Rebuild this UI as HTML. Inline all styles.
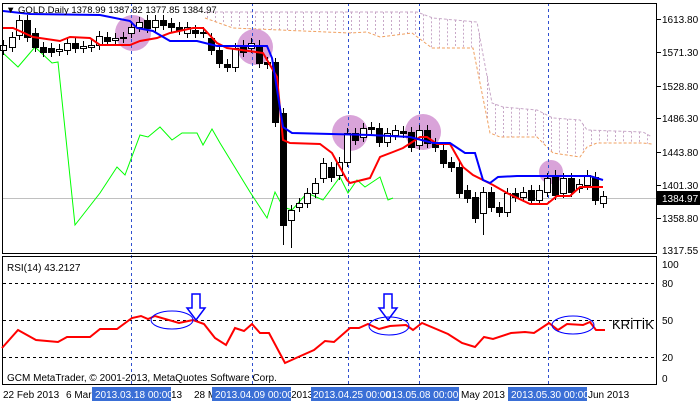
<!DOCTYPE html>
<html><head><meta charset="utf-8"><style>
html,body{margin:0;padding:0;background:#fff;width:700px;height:402px;overflow:hidden}
svg{display:block;font-family:"Liberation Sans",sans-serif}
</style></head><body>
<svg id="s" width="700" height="402" xmlns="http://www.w3.org/2000/svg">
<rect width="700" height="402" fill="#fff"/>
<g id="cloud"></g>
<g fill="#d9a3d9">
<circle cx="133" cy="33" r="18"/><circle cx="255" cy="47" r="18"/><circle cx="350" cy="133" r="18"/><circle cx="423" cy="132" r="18"/><circle cx="551" cy="172" r="12"/>
</g>
<g stroke="#3050d0" stroke-dasharray="3,3" stroke-width="1">
<line x1="131.5" y1="3" x2="131.5" y2="385"/><line x1="252.5" y1="3" x2="252.5" y2="385"/><line x1="348.5" y1="3" x2="348.5" y2="385"/><line x1="419.5" y1="3" x2="419.5" y2="385"/><line x1="548.5" y1="3" x2="548.5" y2="385"/>
</g>
<line x1="2" y1="198.5" x2="657" y2="198.5" stroke="#c0c0c0"/>
<polyline fill="none" stroke="#00ff00" stroke-width="1" points="3,53 18,67 35,47 52,63 58,62 75,225 100,193 117,167 125,175 140,135 148,137 160,127 172,140 182,133 197,133 203,145 212,129 220,143 250,192 267,218 275,192 283,207 292,210 307,193 323,200 340,177 348,193 357,180 365,187 380,177 388,200 393,198"/>
<g id="candles"></g>
<polyline fill="none" stroke="#ff0000" stroke-width="2" points="3,28 13,28 33,37 60,41 70,37 90,38 100,45 130,45 140,41 157,38 170,33 193,28 203,28 217,43 227,48 263,53 277,77 283,140 290,143 320,144 332,153 347,180 350,183 370,178 380,157 393,152 403,148 420,137 427,137 437,144 450,144 463,167 473,175 493,185 507,193 530,204 547,204 557,196 570,196 580,187 603,187"/>
<polyline fill="none" stroke="#0000ff" stroke-width="2" points="3,11 30,14 100,15 130,21 137,28 153,31 170,41 197,41 217,46 267,46 272,58 283,127 292,133 370,135 410,137 433,143 450,143 465,153 475,153 483,180 490,183 498,177 517,176 590,176 603,180"/>
<rect x="2.5" y="3.5" width="654" height="250" fill="none" stroke="#000"/>
<rect x="2.5" y="256.5" width="654" height="128" fill="none" stroke="#000"/>
<g font-size="10" fill="#000">
<text x="6" y="13" font-size="9.5">▼ GOLD.Daily  1378.99 1387.82 1377.85 1384.97</text>
<text x="662" y="23">1613.80</text><text x="662" y="56">1571.30</text><text x="662" y="90">1528.80</text><text x="662" y="122">1486.30</text><text x="662" y="156">1443.80</text><text x="662" y="189">1401.30</text><text x="662" y="222">1358.80</text><text x="662" y="254">1317.55</text>
<rect x="657" y="191" width="43" height="14" fill="#000"/>
<text x="662" y="202" fill="#fff">1384.97</text>
<text x="662" y="268">100</text><text x="662" y="287">80</text><text x="662" y="324">50</text><text x="662" y="361">20</text><text x="662" y="382">0</text>
<text x="7" y="271">RSI(14) 43.2127</text>
<text x="7" y="381">GCM MetaTrader, © 2001-2013, MetaQuotes Software Corp.</text>
</g>
<g stroke="#000" stroke-width="1">
<line x1="657" y1="19.5" x2="661" y2="19.5"/><line x1="657" y1="52.5" x2="661" y2="52.5"/><line x1="657" y1="86.5" x2="661" y2="86.5"/><line x1="657" y1="118.5" x2="661" y2="118.5"/><line x1="657" y1="152.5" x2="661" y2="152.5"/><line x1="657" y1="185.5" x2="661" y2="185.5"/><line x1="657" y1="218.5" x2="661" y2="218.5"/>
</g>
<g stroke="#000" stroke-dasharray="3,3"><line x1="3" y1="283.5" x2="656" y2="283.5"/><line x1="3" y1="320.5" x2="656" y2="320.5"/><line x1="3" y1="357.5" x2="656" y2="357.5"/></g>
<polyline fill="none" stroke="#ff0000" stroke-width="2" points="2,348 18,330 36,340 58,342 67,337 90,337 100,329 117,329 132,318 141,316 148,319 155,316 179,323 193,320 204,324 215,338 226,345 235,328 244,331 252,324 260,333 269,333 285,363 296,358 314,350 325,341 334,342 350,328 359,328 368,324 379,329 390,326 406,325 413,330 422,323 448,334 462,343 475,347 484,337 493,339 511,333 525,332 534,333 549,323 558,330 567,324 583,325 590,322 596,330 605,330"/>
<g fill="none" stroke="#0000ff" stroke-width="1">
<ellipse cx="172" cy="320" rx="21" ry="9"/><ellipse cx="389" cy="326" rx="20" ry="9"/><ellipse cx="573" cy="325" rx="21" ry="9"/>
<path d="M192,294 h8 v14 h5 l-9,12 l-9,-12 h5 z" stroke-width="1.5"/>
<path d="M384,294 h8 v14 h5 l-9,12 l-9,-12 h5 z" stroke-width="1.5"/>
</g>
<text x="612" y="329" font-size="13" fill="#000">KRİTİK</text>
<g font-size="10" fill="#000">
<text x="3" y="398">22 Feb 2013</text><text x="66" y="398">6 Mar</text><text x="171" y="398">13</text><text x="194" y="398">28 M</text><text x="291" y="398">2013</text><text x="461" y="398">May 2013</text><text x="588" y="398">Jun 2013</text>
</g>
<g fill="#3a6fd6"><rect x="92" y="387" width="79" height="14"/><rect x="212" y="387" width="79" height="14"/><rect x="311" y="387" width="74" height="14"/><rect x="385" y="387" width="74" height="14"/><rect x="508" y="387" width="79" height="14"/></g>
<g font-size="10" fill="#fff">
<text x="95" y="398">2013.03.18 00:00</text><text x="215" y="398">2013.04.09 00:00</text><text x="313" y="398">2013.04.25 00:00</text><text x="386" y="398">013.05.08 00:00</text><text x="511" y="398">2013.05.30 00:00</text>
</g>
</svg>
<script>
var NS="http://www.w3.org/2000/svg";
function el(p,t,a){var e=document.createElementNS(NS,t);for(var k in a)e.setAttribute(k,a[k]);p.appendChild(e);return e;}
var cl=document.getElementById('cloud');
var top_=[[205,12],[417,12],[433,18],[477,22],[492,103],[503,107],[537,110],[553,118],[580,120],[587,130],[643,132],[652,137]];
var bot=[[205,18],[233,28],[350,33],[367,32],[380,37],[412,33],[432,48],[473,48],[490,133],[500,137],[537,137],[553,153],[580,157],[587,147],[597,143],[643,143],[652,144]];
function interp(a,x){for(var i=0;i<a.length-1;i++){if(x>=a[i][0]&&x<=a[i+1][0]){var t=(x-a[i][0])/(a[i+1][0]-a[i][0]);return a[i][1]+t*(a[i+1][1]-a[i][1]);}}return a[a.length-1][1];}
for(var x=207;x<652;x+=8){el(cl,'line',{x1:x+.5,y1:interp(top_,x),x2:x+.5,y2:interp(bot,x),stroke:'#c8a8c8','stroke-dasharray':'2,2'});}
el(cl,'polyline',{points:top_.map(function(p){return p.join(',')}).join(' '),fill:'none',stroke:'#c8a8c8','stroke-dasharray':'3,2'});
el(cl,'polyline',{points:bot.map(function(p){return p.join(',')}).join(' '),fill:'none',stroke:'#f0a060','stroke-dasharray':'3,2'});
var C=[[3,45,50,1],[12,37,47,1],[19,20,35,1],[27,20,37,0],[35,33,47,0],[43,47,52,0],[51,48,52,0],[59,49,51,1],[67,43,50,1],[75,43,48,0],[83,46,48,1],[91,45,47,1],[99,36,45,1],[107,37,41,0],[115,38,40,1],[123,37,38,0],[131,27,33,1],[139,22,27,1],[147,20,28,0],[155,20,27,1],[163,20,25,0],[171,23,27,0],[179,27,30,0],[187,27,33,1],[195,30,33,0],[203,32,33,0],[211,38,50,0],[219,50,63,0],[227,64,67,0],[235,48,67,1],[243,45,52,0],[251,43,48,1],[259,45,63,0],[267,62,64,0],[275,62,122,0],[283,113,225,0],[291,210,220,1],[299,203,207,1],[307,193,203,1],[315,183,193,1],[323,163,178,1],[331,167,177,0],[339,162,175,1],[347,133,162,1],[355,133,140,0],[363,128,137,1],[371,127,129,0],[379,128,142,0],[387,133,142,1],[395,130,135,1],[403,131,133,0],[411,132,147,0],[419,130,145,1],[427,130,143,0],[435,143,147,0],[443,150,163,0],[451,162,167,0],[459,167,193,0],[467,190,198,0],[475,197,218,0],[483,192,213,1],[491,192,207,0],[499,207,212,0],[507,193,212,1],[515,193,197,0],[523,192,197,1],[531,190,200,0],[539,190,200,1],[547,178,192,1],[555,175,195,0],[563,178,193,1],[571,178,192,0],[579,184,188,1],[587,175,185,1],[595,177,200,0],[603,196,203,1]];
var cg=document.getElementById('candles');
C.forEach(function(c){var hi=c[1]-5,lo=c[2]+5;if(c[0]==283){lo=245;}if(c[0]==291)lo=248;if(c[0]==275)hi=58;if(c[0]==483)lo=235;
el(cg,'line',{x1:c[0]+.5,y1:hi,x2:c[0]+.5,y2:lo,stroke:'#000'});
el(cg,'rect',{x:c[0]-2.5,y:c[1]+.5,width:6,height:Math.max(1,c[2]-c[1]),fill:c[3]?'#fff':'#000',stroke:'#000'});});
</script>
</body></html>
